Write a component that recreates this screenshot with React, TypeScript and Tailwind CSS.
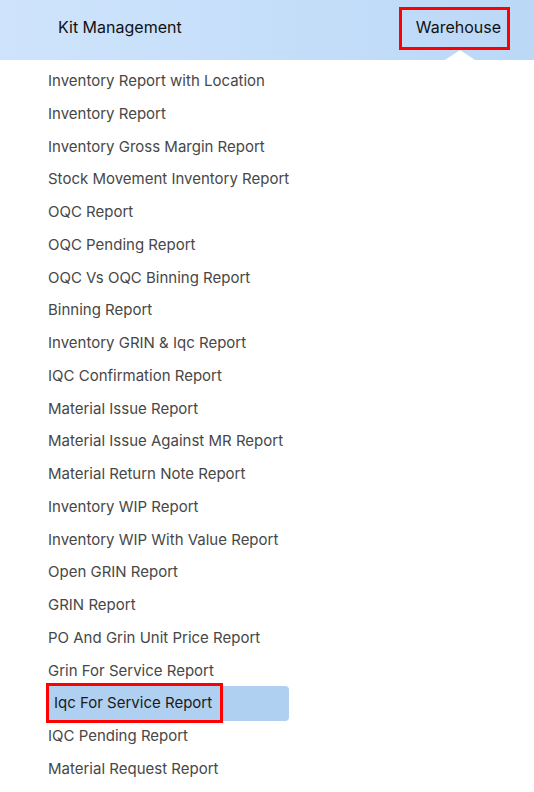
import React from 'react';

const reports = [
  'Inventory Report with Location',
  'Inventory Report',
  'Inventory Gross Margin Report',
  'Stock Movement Inventory Report',
  'OQC Report',
  'OQC Pending Report',
  'OQC Vs OQC Binning Report',
  'Binning Report',
  'Inventory GRIN & Iqc Report',
  'IQC Confirmation Report',
  'Material Issue Report',
  'Material Issue Against MR Report',
  'Material Return Note Report',
  'Inventory WIP Report',
  'Inventory WIP With Value Report',
  'Open GRIN Report',
  'GRIN Report',
  'PO And Grin Unit Price Report',
  'Grin For Service Report',
  'Iqc For Service Report',
  'IQC Pending Report',
  'Material Request Report',
];

const ACTIVE = 'Iqc For Service Report';

export default function App() {
  return (
    <div className="relative h-[792px] w-[534px] overflow-hidden bg-white font-['Inter',sans-serif]">
      <header className="relative flex h-[60px] items-center bg-gradient-to-r from-[#cfe4fc] to-[#bbd8f7] pb-[6px] text-[16px] text-[#111]">
        <span className="ml-[58px]">Kit Management</span>
        <span className="ml-auto mr-[33px]">Warehouse</span>
        {/* caret under active tab */}
        <div className="absolute bottom-0 left-[445px] h-0 w-0 border-x-[15px] border-b-[10px] border-x-transparent border-b-white" />
        <div className="absolute left-[399px] top-[7px] h-[43px] w-[111px] border-[3px] border-[#ff0000]" />
      </header>

      <ul className="pt-[5px] text-[15px] text-[#474747]">
        {reports.map((r) =>
          r === ACTIVE ? (
            <li
              key={r}
              className="relative -my-[1px] ml-[47px] flex h-[34.75px] w-[242px] items-center rounded-[4px] bg-[#b0d0f1] pl-[7px] text-[#1a1a1a]"
            >
              {r}
              <div className="absolute -left-[1px] -top-[3px] h-[40px] w-[177px] border-[3px] border-[#ff0000]" />
            </li>
          ) : (
            <li key={r} className="flex h-[32.75px] items-center pl-[48px]">
              {r}
            </li>
          )
        )}
      </ul>
    </div>
  );
}
